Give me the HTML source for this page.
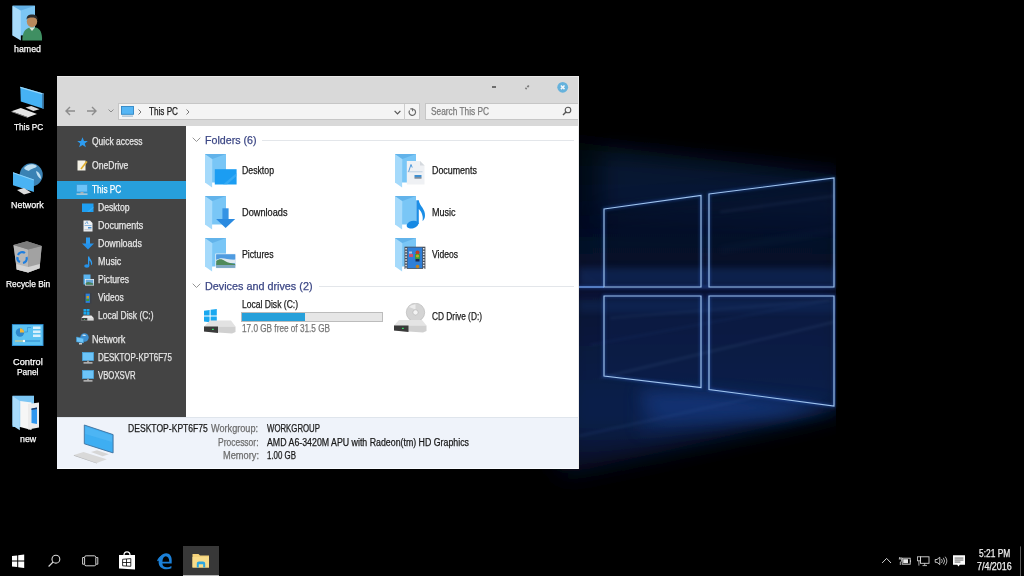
<!DOCTYPE html><html><head><meta charset="utf-8"><style>*{margin:0;padding:0;box-sizing:border-box}
html,body{width:1024px;height:576px;overflow:hidden;background:#000;font-family:"Liberation Sans",sans-serif}
.a{position:absolute}
.t{position:absolute;white-space:nowrap;line-height:1;-webkit-text-stroke:0.25px currentColor}
</style></head><body><svg id="wall" class="a" style="left:0;top:0" width="1024" height="576" viewBox="0 0 1024 576"><defs><linearGradient id="wg" x1="0" y1="0" x2="0" y2="1"><stop offset="0" stop-color="#020712"/><stop offset="0.3" stop-color="#061230"/><stop offset="0.6" stop-color="#0b1f4c"/><stop offset="0.82" stop-color="#0f2a60"/><stop offset="1" stop-color="#060f2c"/></linearGradient><filter id="glow" x="-20%" y="-20%" width="140%" height="140%"><feGaussianBlur stdDeviation="1.5"/></filter><filter id="b8" x="-50%" y="-50%" width="200%" height="200%"><feGaussianBlur stdDeviation="8"/></filter><filter id="b3" x="-50%" y="-50%" width="200%" height="200%"><feGaussianBlur stdDeviation="3"/></filter><clipPath id="wc"><rect x="0" y="0" width="836" height="576"/></clipPath><filter id="b12" x="-50%" y="-50%" width="200%" height="200%"><feGaussianBlur stdDeviation="12"/></filter></defs><rect width="1024" height="576" fill="#000"/><g clip-path="url(#wc)" opacity="0.8"><polygon points="560,140 845,176 845,408 560,476" fill="url(#wg)" filter="url(#b12)"/><polygon points="640,385 705,392 840,406 720,424 640,432" fill="#1a3f90" opacity="0.45" filter="url(#b8)"/><polygon points="600,150 845,176 845,225 600,215" fill="#12306a" opacity="0.45" filter="url(#b12)"/><polygon points="604,215 834,190 834,260 604,260" fill="#0c2250" opacity="0.35" filter="url(#b12)"/><g fill="#040e24" opacity="0.3"><polygon points="604,209 701,195.5 701,287 604,287" /><polygon points="709,194 834,178 834,287 709,287" /><polygon points="604,296 701,296 701,387.5 604,376" /><polygon points="709,296 834,296 834,406 709,389.5" /></g><polygon points="604,296 834,296 834,406 709,389.5 604,376" fill="#12357e" opacity="0.35" filter="url(#b3)"/><path d="M600 378 L834 322" stroke="#6f96d0" stroke-width="1.5" opacity="0.25" filter="url(#glow)"/><path d="M610 318 L834 300" stroke="#6f96d0" stroke-width="1.5" opacity="0.18" filter="url(#glow)"/><path d="M720 212 L834 196" stroke="#6f96d0" stroke-width="2" opacity="0.15" filter="url(#glow)"/><polygon points="640,395 705,392 834,406 780,418 660,420" fill="#1d4fb0" opacity="0.45" filter="url(#b8)"/><rect x="579" y="268" width="257" height="18" fill="#1c4c9e" opacity="0.4" filter="url(#b3)"/><rect x="579" y="300" width="257" height="12" fill="#1c4c9e" opacity="0.25" filter="url(#b3)"/><path d="M579 436 L760 396" stroke="#4a78c8" stroke-width="1.2" opacity="0.4" filter="url(#glow)"/><path d="M590 345 L830 300" stroke="#3a64b0" stroke-width="1" opacity="0.3" filter="url(#glow)"/><path d="M720 250 L834 230" stroke="#3a5a90" stroke-width="2" opacity="0.25" filter="url(#b3)"/></g><g fill="none" stroke="#3d7fff" stroke-width="2.5" filter="url(#glow)" opacity="0.35"><polygon points="604,209 701,195.5 701,287 604,287" /><polygon points="709,194 834,178 834,287 709,287" /><polygon points="604,296 701,296 701,387.5 604,376" /><polygon points="709,296 834,296 834,406 709,389.5" /><line x1="560" y1="287" x2="710" y2="287"/></g><g fill="none" stroke="#a0c4ee" stroke-width="1.15"><polygon points="604,209 701,195.5 701,287 604,287" /><polygon points="709,194 834,178 834,287 709,287" /><polygon points="604,296 701,296 701,387.5 604,376" /><polygon points="709,296 834,296 834,406 709,389.5" /></g><line x1="579" y1="287" x2="604" y2="287" stroke="#7fb2ff" stroke-width="1.2"/></svg><svg class="a" style="left:0px;top:0px;" width="56" height="45" viewBox="0 0 56 45"><polygon points="12.5,5.7 35,5.7 35,35.4 12.5,35.4" fill="#7cc6f4"/><polygon points="12.5,5.7 35,5.7 20.8,10.5" fill="#62b0e6"/><polygon points="12.5,6 20.8,10.8 20.8,40.6 12.5,35.6" fill="#a8dbfb"/><path d="M22.4 40.6 C22 33 25 28.5 30 27.5 L36 27.5 C40 28.5 42.5 33 42 40.6 Z" fill="#3f8f62"/><path d="M29 27.5 L32 31 L35 27.5 Z" fill="#d8e8d8"/><ellipse cx="32" cy="21.5" rx="5.2" ry="5.8" fill="#b9895c"/><path d="M26.6 19.5 C26.5 15.5 29 14.5 32 14.5 C35.5 14.5 37.8 16 37.6 20 C36.5 18 34 17.5 32 17.5 C29.5 17.5 27.5 18 26.6 19.5 Z" fill="#2c2c2c"/></svg><svg class="a" style="left:0px;top:80px;" width="56" height="45" viewBox="0 80 56 45"><polygon points="20.3,86.8 43.5,93.6 43.5,108.8 20.8,101.5" fill="#46b2f4"/><polygon points="20.3,86.8 43.5,93.6 43.5,94.8 20.3,88" fill="#9cd8fa"/><polygon points="42.2,93.2 43.8,93.7 43.8,109 42.2,108.5" fill="#3a6f98"/><polygon points="25.5,107.6 31.25,106 39.6,109.2 33.3,110.9" fill="#d8d8d8"/><polygon points="11.5,111.25 20.8,108.1 37,113.9 28.1,117.2" fill="#e6e6e6"/><polygon points="11.5,111.25 28.1,117.2 28.1,118 11.5,112" fill="#9a9a9a"/></svg><svg class="a" style="left:0px;top:155px;" width="56" height="45" viewBox="0 155 56 45"><circle cx="31.25" cy="174.8" r="11.5" fill="#3a82b4"/><path d="M24 168 C27 164 33 163 37 166 C35 169 31 168 29 171 C27 170 25 170 24 168 Z" fill="#bfe0f2"/><path d="M36 171 C39 172 41 175 41 179 C39 178 37 176 36 171 Z" fill="#bfe0f2"/><polygon points="13,172.2 33.9,179.5 33.9,192 13,185.2" fill="#4ab3f3"/><polygon points="13,172.2 33.9,179.5 33.9,180.5 13,173.2" fill="#8fd3fa"/><polygon points="17,190 24,188 31,192.5 24,194.5" fill="#dcdcdc"/></svg><svg class="a" style="left:0px;top:235px;" width="56" height="45" viewBox="0 235 56 45"><polygon points="13.5,244.9 27,241.25 41.7,246 39.6,268.3 28.1,272.5 16.7,269.4" fill="#8c8c8c"/><polygon points="13.5,244.9 28.1,249.6 28.1,272.5 16.7,269.4" fill="#b8b8b8"/><polygon points="28.1,249.6 41.7,246 39.6,268.3 28.1,272.5" fill="#a2a2a2"/><polygon points="13.5,244.9 27,241.25 41.7,246 28.1,249.6" fill="#7c7c7c"/><polygon points="16.5,264 28.1,267 39.8,264 39.6,268.3 28.1,272.5 16.7,269.4" fill="#d4d4d4"/><g fill="none" stroke="#1f7fe0" stroke-width="2.2"><path d="M18 255 A4.5 4.5 0 0 1 25 253"/><path d="M26.5 257 A4.5 4.5 0 0 1 23 263"/><path d="M20 262 A4.5 4.5 0 0 1 17.5 257"/></g></svg><svg class="a" style="left:0px;top:315px;" width="56" height="45" viewBox="0 315 56 45"><rect x="11.9" y="324.1" width="31.6" height="21.9" fill="#2e8fd4"/><rect x="12.8" y="325" width="29.8" height="20.1" fill="#5cc2f2"/><circle cx="20" cy="332.5" r="4.2" fill="#2e88cc"/><path d="M20 332.5 L20 328.3 A4.2 4.2 0 0 1 24.2 332.5 Z" fill="#f2b83a"/><path d="M24.5 332 L27.5 332 L27.5 327.5 L31 327.5" stroke="#2e88cc" stroke-width="0.6" fill="none"/><rect x="33" y="326.5" width="7.5" height="2.5" fill="#d8f0fc"/><rect x="33" y="330.5" width="7.5" height="2.5" fill="#d8f0fc"/><rect x="33" y="334.5" width="7.5" height="2.5" fill="#d8f0fc"/><rect x="15" y="340.5" width="9" height="1" fill="#f2d27a"/><rect x="24" y="340.5" width="16" height="1" fill="#2e88cc"/><circle cx="24" cy="341" r="1.2" fill="#fff"/></svg><svg class="a" style="left:0px;top:390px;" width="56" height="45" viewBox="0 390 56 45"><polygon points="12.5,395.7 34,395.7 34,427 12.5,427" fill="#7cc6f4"/><polygon points="12.5,396 19.8,401 19.8,430.2 12.5,425.5" fill="#a8dbfb"/><polygon points="20.2,401 31.5,402.5 31.5,430 20.2,427" fill="#f6f6f6"/><polygon points="28,404 39,402.5 39,427.5 28,429.5" fill="#ececec"/><polygon points="31.5,408.5 37,407.5 37,424 31.5,423" fill="#2f96ee"/><polygon points="31.5,408.5 37,407.5 37,409 31.5,410" fill="#1a3a6a"/></svg><span class="t" style="left:14.00px;top:44.07px;font-size:9.60px;color:#ffffff;transform:scaleX(0.9191);transform-origin:left top;">hamed</span><span class="t" style="left:13.50px;top:122.07px;font-size:9.60px;color:#ffffff;transform:scaleX(0.8556);transform-origin:left top;">This PC</span><span class="t" style="left:11.00px;top:200.07px;font-size:9.60px;color:#ffffff;transform:scaleX(0.9283);transform-origin:left top;">Network</span><span class="t" style="left:5.70px;top:279.07px;font-size:9.60px;color:#ffffff;transform:scaleX(0.8740);transform-origin:left top;">Recycle Bin</span><span class="t" style="left:12.75px;top:357.07px;font-size:9.60px;color:#ffffff;transform:scaleX(0.9609);transform-origin:left top;">Control</span><span class="t" style="left:16.50px;top:367.07px;font-size:9.60px;color:#ffffff;transform:scaleX(0.8748);transform-origin:left top;">Panel</span><span class="t" style="left:19.80px;top:434.07px;font-size:9.60px;color:#ffffff;transform:scaleX(0.9196);transform-origin:left top;">new</span><div class="a" style="left:57px;top:76px;width:522px;height:393px;background:#fff;"></div><div class="a" style="left:57px;top:76px;width:522px;height:393px;background:transparent;border-top:1px solid #e8e8e8;border-right:1px solid #ececec;z-index:5"></div><div class="a" style="left:57px;top:76px;width:522px;height:50px;background:#d9d9d9;"></div><div class="a" style="left:492px;top:86.3px;width:4.4px;height:1.6px;background:#6e6e6e;"></div><svg class="a" style="left:523px;top:83px;" width="8" height="8" viewBox="0 0 8 8"><path d="M2.5 6 L3.6 4.9 M4.4 4.1 L5.8 2.5" stroke="#7a7a7a" stroke-width="1.8" fill="none"/></svg><svg class="a" style="left:555.5px;top:80.5px;" width="13" height="13" viewBox="0 0 13 13"><circle cx="6.7" cy="6.3" r="5.4" fill="#66b2dc"/><path d="M4.9 4.5 L8.5 8.1 M8.5 4.5 L4.9 8.1" stroke="#f4f8fb" stroke-width="1.5"/></svg><svg class="a" style="left:64px;top:105px;" width="12" height="12" viewBox="0 0 12 12"><path d="M11 6 H2 M6 2 L2 6 L6 10" stroke="#8c8c8c" stroke-width="1.4" fill="none"/></svg><svg class="a" style="left:86px;top:105px;" width="12" height="12" viewBox="0 0 12 12"><path d="M1 6 H10 M6 2 L10 6 L6 10" stroke="#8c8c8c" stroke-width="1.4" fill="none"/></svg><svg class="a" style="left:108px;top:109px;" width="6" height="4" viewBox="0 0 6 4"><path d="M0.5 0.5 L3 3 L5.5 0.5" stroke="#8c8c8c" stroke-width="1" fill="none"/></svg><div class="a" style="left:118px;top:103px;width:301.5px;height:17px;background:#f4f4f4;border:1px solid #c6c6c6"></div><div class="a" style="left:404px;top:103.5px;width:1px;height:16px;background:#cdcdcd;"></div><svg class="a" style="left:120.5px;top:106px;" width="13" height="11" viewBox="0 0 13 11"><rect x="0.5" y="0.5" width="12" height="7.8" fill="#55b6f5" stroke="#2f86c4" stroke-width="0.9"/><rect x="1" y="9.6" width="11" height="1" fill="#8fb0c8"/></svg><svg class="a" style="left:138px;top:108.5px;" width="4" height="6" viewBox="0 0 4 6"><path d="M0.5 0.5 L3 3 L0.5 5.5" stroke="#777" stroke-width="1" fill="none"/></svg><span class="t" style="left:149.30px;top:106.73px;font-size:10.00px;color:#1a1a1a;transform:scaleX(0.8158);transform-origin:left top;">This PC</span><svg class="a" style="left:185.5px;top:108.5px;" width="4" height="6" viewBox="0 0 4 6"><path d="M0.5 0.5 L3 3 L0.5 5.5" stroke="#777" stroke-width="1" fill="none"/></svg><svg class="a" style="left:394px;top:110px;" width="7" height="5" viewBox="0 0 7 5"><path d="M0.6 0.8 L3.5 3.8 L6.4 0.8" stroke="#555" stroke-width="1.2" fill="none"/></svg><svg class="a" style="left:407px;top:106px;" width="10" height="10" viewBox="0 0 10 10"><path d="M5.4 3 A3.2 3.2 0 1 1 2.6 4.5" stroke="#6a6a6a" stroke-width="1.2" fill="none"/><path d="M3.3 2.9 L5.6 2.9 L5.6 5.2" stroke="#6a6a6a" stroke-width="1.1" fill="none"/></svg><div class="a" style="left:424.5px;top:103px;width:154px;height:17px;background:#f4f4f4;border:1px solid #c6c6c6"></div><span class="t" style="left:431.40px;top:106.73px;font-size:10.00px;color:#7a7a7a;transform:scaleX(0.8304);transform-origin:left top;">Search This PC</span><svg class="a" style="left:562px;top:106px;" width="10" height="10" viewBox="0 0 10 10"><circle cx="6" cy="4" r="2.8" stroke="#555" stroke-width="1.1" fill="none"/><path d="M4 6 L1 9" stroke="#555" stroke-width="1.4"/></svg><div class="a" style="left:57px;top:126px;width:129px;height:291px;background:#444444;"></div><div class="a" style="left:57px;top:181px;width:129px;height:18px;background:#279fdc;"></div><svg class="a" style="left:77px;top:137px;" width="11" height="11" viewBox="0 0 11 11"><polygon points="5.5,0.3 7,4 10.8,4.1 7.8,6.5 8.9,10.3 5.5,8.1 2.1,10.3 3.2,6.5 0.2,4.1 4,4" fill="#2d9cf0"/></svg><span class="t" style="left:92.00px;top:136.73px;font-size:10.00px;color:#e6e6e6;transform:scaleX(0.8478);transform-origin:left top;">Quick access</span><svg class="a" style="left:77px;top:160px;" width="11" height="11" viewBox="0 0 11 11"><rect x="0.5" y="0.5" width="8" height="10" fill="#f4f1e6"/><path d="M9.8 1.5 L4 9" stroke="#f0c040" stroke-width="1.8"/><path d="M9.8 1.5 L4 9" stroke="#b88a20" stroke-width="0.5"/></svg><span class="t" style="left:92.00px;top:160.73px;font-size:10.00px;color:#e6e6e6;transform:scaleX(0.8568);transform-origin:left top;">OneDrive</span><svg class="a" style="left:76px;top:184px;" width="12" height="11" viewBox="0 0 12 11"><rect x="0.5" y="0.5" width="11" height="7.5" fill="#6cc4f8" stroke="#3a9ad8" stroke-width="0.8"/><rect x="4.5" y="8" width="3" height="1.5" fill="#aaa"/><rect x="0.5" y="9.5" width="11" height="1.2" fill="#d8d8d8"/></svg><span class="t" style="left:92.00px;top:184.73px;font-size:10.00px;color:#ffffff;transform:scaleX(0.8242);transform-origin:left top;">This PC</span><svg class="a" style="left:82px;top:203px;" width="12" height="10" viewBox="0 0 12 10"><rect x="0" y="0.5" width="11.5" height="8.5" fill="#1e9ff2"/><polygon points="5,9 11.5,3.5 11.5,5 7,9" fill="#3fb2f8" opacity="0.7"/></svg><span class="t" style="left:98.00px;top:202.73px;font-size:10.00px;color:#e6e6e6;transform:scaleX(0.8610);transform-origin:left top;">Desktop</span><svg class="a" style="left:83px;top:220px;" width="10" height="12" viewBox="0 0 10 12"><polygon points="0.5,0.5 7,0.5 9.5,3 9.5,11.5 0.5,11.5" fill="#eef0f2"/><rect x="1.5" y="5" width="7" height="0.6" fill="#4a90d0"/><path d="M2 4 L4 1.5 L5 4" stroke="#4a90d0" stroke-width="0.7" fill="none"/><rect x="5" y="7" width="3.5" height="1.5" fill="#4a90d0"/><rect x="1.5" y="9.5" width="7" height="0.6" fill="#a8b0b8"/></svg><span class="t" style="left:98.00px;top:220.73px;font-size:10.00px;color:#e6e6e6;transform:scaleX(0.8933);transform-origin:left top;">Documents</span><svg class="a" style="left:82px;top:237px;" width="12" height="13" viewBox="0 0 12 13"><rect x="4" y="0.5" width="4" height="7" fill="#2d9cf0"/><polygon points="0,6.5 12,6.5 6,12.5" fill="#2592ea"/></svg><span class="t" style="left:98.00px;top:238.73px;font-size:10.00px;color:#e6e6e6;transform:scaleX(0.8857);transform-origin:left top;">Downloads</span><svg class="a" style="left:84px;top:256px;" width="9" height="12" viewBox="0 0 9 12"><path d="M4 0.5 L5.3 0.5 C5.8 3 8.5 4.5 8.2 7.5 C8 8.5 7.5 9 7 9.3 C7.3 7.5 6.5 5.5 5.3 4.6 L5.3 10 L4 10 Z" fill="#2d9cf0"/><ellipse cx="2.8" cy="10" rx="2.6" ry="1.8" fill="#2592ea"/></svg><span class="t" style="left:98.00px;top:256.74px;font-size:10.00px;color:#e6e6e6;transform:scaleX(0.8927);transform-origin:left top;">Music</span><svg class="a" style="left:83px;top:274px;" width="11" height="12" viewBox="0 0 11 12"><rect x="0.5" y="0.5" width="7" height="10" fill="#5ab4f0"/><rect x="2" y="5" width="9" height="6.5" fill="#f0f4f8"/><rect x="2.7" y="5.7" width="7.6" height="5.1" fill="#6aa8d8"/><path d="M2.7 9 C5 7 7 8 10.3 9.5 L10.3 10.8 L2.7 10.8 Z" fill="#4a8058"/></svg><span class="t" style="left:98.00px;top:274.74px;font-size:10.00px;color:#e6e6e6;transform:scaleX(0.8560);transform-origin:left top;">Pictures</span><svg class="a" style="left:84px;top:293px;" width="8" height="11" viewBox="0 0 8 11"><rect x="0" y="0" width="7.5" height="10.5" fill="#3a3f48"/><rect x="1.6" y="0.6" width="4.3" height="9.3" fill="#2f7fd8"/><rect x="2.5" y="3" width="2.5" height="2.5" fill="#c8a020"/><rect x="2.2" y="6" width="3" height="2" fill="#3a9a40"/></svg><span class="t" style="left:98.00px;top:292.74px;font-size:10.00px;color:#e6e6e6;transform:scaleX(0.8454);transform-origin:left top;">Videos</span><svg class="a" style="left:81px;top:309px;" width="13" height="12" viewBox="0 0 13 12"><g fill="#1aa9f0"><rect x="2.5" y="0" width="2.6" height="2.6"/><rect x="5.5" y="-0.3" width="3" height="2.9"/><rect x="2.5" y="3" width="2.6" height="2.6"/><rect x="5.5" y="3" width="3" height="2.9"/></g><polygon points="0.3,9 2.5,6.5 10.5,6.5 12.7,9" fill="#e8e8e8"/><rect x="0.3" y="9" width="12.4" height="2.6" fill="#d8d8d8"/><rect x="0.3" y="9" width="6" height="2.6" fill="#404040"/><rect x="3" y="10" width="1" height="0.8" fill="#3adf6a"/></svg><span class="t" style="left:98.00px;top:310.74px;font-size:10.00px;color:#e6e6e6;transform:scaleX(0.8467);transform-origin:left top;">Local Disk (C:)</span><svg class="a" style="left:76px;top:333px;" width="13" height="12" viewBox="0 0 13 12"><circle cx="8.5" cy="4.5" r="4.2" fill="#3d8fcf"/><path d="M6 2 C7.5 1 9 1.5 10 2.5 C9 3.5 7 3 6 2 Z" fill="#cfe6f4"/><polygon points="0.5,4 7.5,5.5 7.5,10 0.5,8.8" fill="#6cc4f8" stroke="#3a9ad8" stroke-width="0.5"/><rect x="3" y="10" width="3" height="1.5" fill="#ccc"/></svg><span class="t" style="left:92.00px;top:334.74px;font-size:10.00px;color:#e6e6e6;transform:scaleX(0.9088);transform-origin:left top;">Network</span><svg class="a" style="left:82px;top:352px;" width="12" height="12" viewBox="0 0 12 12"><rect x="0.5" y="0.5" width="11" height="8" fill="#6cc4f8" stroke="#4aa5dd" stroke-width="0.8"/><rect x="5" y="8.5" width="2" height="1.8" fill="#999"/><rect x="1.5" y="10.3" width="9" height="1.2" fill="#d8d8d8"/></svg><span class="t" style="left:98.00px;top:352.74px;font-size:10.00px;color:#e6e6e6;transform:scaleX(0.7929);transform-origin:left top;">DESKTOP-KPT6F75</span><svg class="a" style="left:82px;top:370px;" width="12" height="12" viewBox="0 0 12 12"><rect x="0.5" y="0.5" width="11" height="8" fill="#6cc4f8" stroke="#4aa5dd" stroke-width="0.8"/><rect x="5" y="8.5" width="2" height="1.8" fill="#999"/><rect x="1.5" y="10.3" width="9" height="1.2" fill="#d8d8d8"/></svg><span class="t" style="left:98.00px;top:370.74px;font-size:10.00px;color:#e6e6e6;transform:scaleX(0.7756);transform-origin:left top;">VBOXSVR</span><svg class="a" style="left:192px;top:137px;" width="9" height="6" viewBox="0 0 9 6"><path d="M0.7 0.7 L4.5 4.5 L8.3 0.7" stroke="#8a8a8a" stroke-width="0.9" fill="none"/></svg><span class="t" style="left:204.50px;top:134.89px;font-size:11.00px;color:#3d4886;transform:scaleX(0.9683);transform-origin:left top;">Folders (6)</span><div class="a" style="left:262px;top:140px;width:312px;height:1px;background:#e3e6ea;"></div><svg class="a" style="left:205.2px;top:154.2px;" width="34" height="36" viewBox="0 0 34 36"><polygon points="0,0 21,0 21,28.5 0,28.5" fill="#79c6f6"/><polygon points="0,0 21,0 7.3,5" fill="#62b3ea"/><polygon points="0,0.3 7.3,5.2 7.1,33.4 0,28.4" fill="#a5dafb"/><rect x="9.8" y="15.2" width="21.8" height="15.3" fill="#1b9df2"/><polygon points="18,30.5 31.6,19 31.6,22 22,30.5" fill="#46b3f7" opacity="0.6"/></svg><svg class="a" style="left:395.4px;top:154.2px;" width="34" height="36" viewBox="0 0 34 36"><polygon points="0,0 21,0 21,28.5 0,28.5" fill="#79c6f6"/><polygon points="0,0 21,0 7.3,5" fill="#62b3ea"/><polygon points="0,0.3 7.3,5.2 7.1,33.4 0,28.4" fill="#a5dafb"/><polygon points="11.8,7 25,7 29.5,11.5 29.5,30.5 11.8,30.5" fill="#eff1f4"/><polygon points="25,7 29.5,11.5 25,11.5" fill="#d5d9de"/><path d="M13.5 18 L16 10.5 L17.2 13.5" stroke="#3d8fd8" stroke-width="0.9" fill="none"/><rect x="12.5" y="17.5" width="15" height="0.7" fill="#a7c4dc"/><rect x="19.5" y="21" width="7" height="2.2" fill="#3f8fd0"/><rect x="19.5" y="23.2" width="7" height="1.4" fill="#6a7a8a"/></svg><span class="t" style="left:241.70px;top:165.73px;font-size:10.00px;color:#1a1a1a;transform:scaleX(0.8719);transform-origin:left top;">Desktop</span><span class="t" style="left:432.00px;top:165.73px;font-size:10.00px;color:#1a1a1a;transform:scaleX(0.8874);transform-origin:left top;">Documents</span><svg class="a" style="left:205.2px;top:196.1px;" width="34" height="36" viewBox="0 0 34 36"><polygon points="0,0 21,0 21,28.5 0,28.5" fill="#79c6f6"/><polygon points="0,0 21,0 7.3,5" fill="#62b3ea"/><polygon points="0,0.3 7.3,5.2 7.1,33.4 0,28.4" fill="#a5dafb"/><rect x="17.4" y="12.3" width="6.2" height="11.5" fill="#3593e4"/><polygon points="11.1,23.1 30.2,23.1 20.6,32.1" fill="#2a8ae0"/></svg><svg class="a" style="left:395.4px;top:196.1px;" width="34" height="36" viewBox="0 0 34 36"><polygon points="0,0 21,0 21,28.5 0,28.5" fill="#79c6f6"/><polygon points="0,0 21,0 7.3,5" fill="#62b3ea"/><polygon points="0,0.3 7.3,5.2 7.1,33.4 0,28.4" fill="#a5dafb"/><path d="M21.3 4.3 L23.8 4.3 C24.5 10 30.5 13 30 20 C29.8 22.5 28.8 24 27.5 25 C28.5 21 27 16 23.8 13 L23.8 28 L21.3 28 Z" fill="#1b8ee6"/><ellipse cx="17.5" cy="28.6" rx="6" ry="3.7" transform="rotate(-15 17.5 28.6)" fill="#1689e3"/></svg><span class="t" style="left:241.70px;top:207.73px;font-size:10.00px;color:#1a1a1a;transform:scaleX(0.9201);transform-origin:left top;">Downloads</span><span class="t" style="left:432.00px;top:207.73px;font-size:10.00px;color:#1a1a1a;transform:scaleX(0.9004);transform-origin:left top;">Music</span><svg class="a" style="left:205.2px;top:238px;" width="34" height="36" viewBox="0 0 34 36"><polygon points="0,0 21,0 21,28.5 0,28.5" fill="#79c6f6"/><polygon points="0,0 21,0 7.3,5" fill="#62b3ea"/><polygon points="0,0.3 7.3,5.2 7.1,33.4 0,28.4" fill="#a5dafb"/><rect x="10.4" y="15.6" width="20.5" height="15" fill="#f4f6f8"/><rect x="11.2" y="16.4" width="19" height="13.4" fill="#6fb0e8"/><rect x="11.2" y="16.4" width="19" height="5" fill="#4f9be0"/><path d="M11.2 22 C15 19.5 18 20 22 21 C25 21.5 28 22 30.2 21.5 L30.2 25 L11.2 25 Z" fill="#dfe9ef"/><path d="M11.2 23 C14 20.5 17 21 20 23 C23 25 27 25.5 30.2 26 L30.2 27.5 L11.2 27.5 Z" fill="#4f8a5a"/><rect x="11.2" y="27" width="19" height="2.8" fill="#7fa8c0"/></svg><svg class="a" style="left:395.4px;top:238px;" width="34" height="36" viewBox="0 0 34 36"><polygon points="0,0 21,0 21,28.5 0,28.5" fill="#79c6f6"/><polygon points="0,0 21,0 7.3,5" fill="#62b3ea"/><polygon points="0,0.3 7.3,5.2 7.1,33.4 0,28.4" fill="#a5dafb"/><rect x="9.5" y="8.7" width="20.9" height="22.2" fill="#4a4f58"/><rect x="12.5" y="9.5" width="14.8" height="20.6" fill="#2f7fd8"/><rect x="10.3" y="10" width="1.5" height="1.5" fill="#e8ecf0"/><rect x="28" y="10" width="1.5" height="1.5" fill="#e8ecf0"/><rect x="10.3" y="12.8" width="1.5" height="1.5" fill="#e8ecf0"/><rect x="28" y="12.8" width="1.5" height="1.5" fill="#e8ecf0"/><rect x="10.3" y="15.6" width="1.5" height="1.5" fill="#e8ecf0"/><rect x="28" y="15.6" width="1.5" height="1.5" fill="#e8ecf0"/><rect x="10.3" y="18.4" width="1.5" height="1.5" fill="#e8ecf0"/><rect x="28" y="18.4" width="1.5" height="1.5" fill="#e8ecf0"/><rect x="10.3" y="21.2" width="1.5" height="1.5" fill="#e8ecf0"/><rect x="28" y="21.2" width="1.5" height="1.5" fill="#e8ecf0"/><rect x="10.3" y="24" width="1.5" height="1.5" fill="#e8ecf0"/><rect x="28" y="24" width="1.5" height="1.5" fill="#e8ecf0"/><rect x="10.3" y="26.8" width="1.5" height="1.5" fill="#e8ecf0"/><rect x="28" y="26.8" width="1.5" height="1.5" fill="#e8ecf0"/><rect x="10.3" y="29.6" width="1.5" height="1.5" fill="#e8ecf0"/><rect x="28" y="29.6" width="1.5" height="1.5" fill="#e8ecf0"/><circle cx="22.5" cy="14.5" r="2" fill="#c04020"/><rect x="20" y="16" width="5" height="5" fill="#3a9a40"/><circle cx="22.5" cy="18" r="1.6" fill="#c8a820"/><rect x="14" y="16" width="4" height="3" fill="#d05070"/><rect x="14" y="13.5" width="3" height="2" fill="#b0c8e8"/><rect x="20.5" y="21" width="4" height="2.5" fill="#1a2a50"/><circle cx="22.5" cy="28.5" r="1.8" fill="#c08020"/></svg><span class="t" style="left:241.70px;top:249.73px;font-size:10.00px;color:#1a1a1a;transform:scaleX(0.8726);transform-origin:left top;">Pictures</span><span class="t" style="left:432.00px;top:249.73px;font-size:10.00px;color:#1a1a1a;transform:scaleX(0.8553);transform-origin:left top;">Videos</span><svg class="a" style="left:192px;top:283px;" width="9" height="6" viewBox="0 0 9 6"><path d="M0.7 0.7 L4.5 4.5 L8.3 0.7" stroke="#8a8a8a" stroke-width="0.9" fill="none"/></svg><span class="t" style="left:204.50px;top:280.89px;font-size:11.00px;color:#3d4886;transform:scaleX(0.9822);transform-origin:left top;">Devices and drives (2)</span><div class="a" style="left:319px;top:286px;width:255px;height:1px;background:#e3e6ea;"></div><svg class="a" style="left:203.6px;top:309px;" width="33" height="25" viewBox="0 -1 33 25"><g fill="#19a8f0"><polygon points="0,0.8 5.6,0 5.6,5.6 0,5.6"/><polygon points="6.6,-0.2 12.8,-1 12.8,5.6 6.6,5.6"/><polygon points="0,6.6 5.6,6.6 5.6,12.2 0,11.4"/><polygon points="6.6,6.6 12.8,6.6 12.8,13 6.6,12.2"/></g><polygon points="0,16.5 6,10.5 27,10.5 31.5,16.5" fill="#e2e2e2"/><polygon points="0,16.5 31.5,16.5 31.5,22 28,23.5 0,21.5" fill="#d0d0d0"/><polygon points="0,16.5 14,16.5 14,23 0,21.5" fill="#3a3a3a"/><rect x="8" y="18.8" width="1.8" height="1.2" fill="#3adf6a"/></svg><span class="t" style="left:241.80px;top:299.74px;font-size:10.00px;color:#1a1a1a;transform:scaleX(0.8543);transform-origin:left top;">Local Disk (C:)</span><div class="a" style="left:241px;top:312px;width:141.5px;height:9.5px;background:#e6e6e6;border:1px solid #bcbcbc"></div><div class="a" style="left:242px;top:313px;width:63px;height:7.5px;background:#26a0da;"></div><span class="t" style="left:241.80px;top:323.74px;font-size:10.00px;color:#767676;transform:scaleX(0.8201);transform-origin:left top;">17.0 GB free of 31.5 GB</span><svg class="a" style="left:394px;top:303px;" width="34" height="31" viewBox="0 0 34 31"><circle cx="21.5" cy="9.4" r="9.2" fill="#d4d4d4"/><circle cx="21.5" cy="9.4" r="9.2" fill="none" stroke="#b4b4b4" stroke-width="0.6"/><path d="M15 4 A8 8 0 0 1 21.5 1.5 L21.5 6.5 Z" fill="#ececec"/><circle cx="21.5" cy="9.4" r="2.6" fill="#f4f4f4" stroke="#a8a8a8" stroke-width="0.5"/><polygon points="0,22.5 5,17 28,17 32.5,22.5" fill="#e4e4e4"/><polygon points="0,22.5 32.5,22.5 32.5,28 29,29.5 0,27.5" fill="#d0d0d0"/><polygon points="0,22.5 14.5,22.5 14.5,29 0,27.5" fill="#3a3a3a"/><rect x="8" y="24.8" width="1.8" height="1.2" fill="#3adf6a"/></svg><span class="t" style="left:432.00px;top:311.74px;font-size:10.00px;color:#1a1a1a;transform:scaleX(0.8333);transform-origin:left top;">CD Drive (D:)</span><div class="a" style="left:57px;top:417px;width:522px;height:52px;background:#eff3fa;border-top:1px solid #dfe5ec;border-bottom:1px solid #fafcff;border-right:1px solid #fafcff"></div><svg class="a" style="left:70px;top:422px;" width="48" height="44" viewBox="0 0 48 44"><polygon points="21,30 27,28.2 38.9,32.2 32.7,34.25" fill="#d6d6d6"/><polygon points="3.9,33 13.5,30 36.8,37.2 26.8,40.9" fill="#d9d9d9"/><polygon points="3.9,33 26.8,40.9 26.8,41.6 3.9,33.7" fill="#b0b0b0"/><polygon points="14.3,3 43.1,12.6 43.1,30.9 14.3,21.75" fill="#3eaef2" stroke="#3f6f9c" stroke-width="0.9"/><polygon points="15.3,4.5 42,13.5 42,20 15.3,12" fill="#5cbcf6" opacity="0.5"/></svg><span class="t" style="left:127.90px;top:423.74px;font-size:10.00px;color:#1a1a1a;transform:scaleX(0.8573);transform-origin:left top;">DESKTOP-KPT6F75</span><span class="t" style="left:211.40px;top:423.74px;font-size:10.00px;color:#6d6d6d;transform:scaleX(0.9126);transform-origin:left top;">Workgroup:</span><span class="t" style="left:267.30px;top:423.74px;font-size:10.00px;color:#1a1a1a;transform:scaleX(0.7817);transform-origin:left top;">WORKGROUP</span><span class="t" style="left:218.00px;top:437.74px;font-size:10.00px;color:#6d6d6d;transform:scaleX(0.8473);transform-origin:left top;">Processor:</span><span class="t" style="left:267.30px;top:437.74px;font-size:10.00px;color:#1a1a1a;transform:scaleX(0.8800);transform-origin:left top;">AMD A6-3420M APU with Radeon(tm) HD Graphics</span><span class="t" style="left:222.50px;top:450.74px;font-size:10.00px;color:#6d6d6d;transform:scaleX(0.9254);transform-origin:left top;">Memory:</span><span class="t" style="left:267.30px;top:450.74px;font-size:10.00px;color:#1a1a1a;transform:scaleX(0.7902);transform-origin:left top;">1.00 GB</span><div class="a" style="left:0px;top:540px;width:1024px;height:36px;background:#000;"></div><svg class="a" style="left:0px;top:544px;" width="104" height="32" viewBox="0 0 104 32"><g fill="#fff" transform="translate(0,0.8)"><polygon points="12,11.3 17.2,10.6 17.2,15.8 12,15.8"/><polygon points="18.2,10.5 24.2,9.7 24.2,15.8 18.2,15.8"/><polygon points="12,16.8 17.2,16.8 17.2,22.2 12,21.6"/><polygon points="18.2,16.8 24.2,16.8 24.2,23.2 18.2,22.4"/></g><circle cx="55.9" cy="15.2" r="3.9" fill="none" stroke="#d8d8d8" stroke-width="1.1"/><path d="M53.1 18 L48.6 22.5" stroke="#d8d8d8" stroke-width="1.2"/><rect x="84.6" y="11.8" width="11.2" height="10" rx="1.5" fill="none" stroke="#cfcfcf" stroke-width="1"/><path d="M84.3 13.5 L82.6 13.5 L82.6 20.2 L84.3 20.2 M96.1 13.5 L97.8 13.5 L97.8 20.2 L96.1 20.2" fill="none" stroke="#cfcfcf" stroke-width="1"/></svg><svg class="a" style="left:118px;top:551px;" width="19" height="20" viewBox="0 0 19 20"><path d="M6 4 C6 1.5 7.5 0.8 9 0.8 C10.5 0.8 12 1.5 12 4" stroke="#fff" stroke-width="1.2" fill="none"/><polygon points="1,4 17,4 17,18.4 1,17.4" fill="#fff"/><g fill="none" stroke="#000" stroke-width="0.8"><polygon points="4.6,8.3 12.8,7.6 12.8,15.3 4.6,14.8"/><path d="M8.5 8 L8.5 15 M4.6 11.5 L12.8 11.5"/></g></svg><svg class="a" style="left:155px;top:551px;" width="19" height="20" viewBox="0 0 19 20"><path fill-rule="evenodd" d="M16.7 12.4 L7.3 12.4 C7.6 15 9.4 16.2 11.9 16.2 C13.6 16.2 15.1 15.7 16.4 14.9 L16.4 17.3 C15 18 13.3 18.3 11.5 18.3 C6.6 18.3 3.6 15.3 3.6 11 C3.6 6.3 7 2.2 11.2 2.2 C14.6 2.2 16.7 5 16.7 9 Z M7.4 10.8 L14.3 10.8 C14.3 7.4 12.9 5.2 10.8 5.2 C8.8 5.2 7.6 7.6 7.4 10.8 Z" fill="#1b80d8"/><path d="M2 10.3 C2.8 7 5 4.8 8.2 4 C6.2 5.4 5 7.2 4.4 9.4 Z" fill="#1b80d8"/></svg><div class="a" style="left:183px;top:546px;width:36px;height:30px;background:#383838;"></div><div class="a" style="left:183px;top:574.5px;width:36px;height:1.5px;background:#b8b8b8;"></div><svg class="a" style="left:192px;top:553px;" width="18" height="16" viewBox="0 0 18 16"><polygon points="0.5,1 6.5,1 8,2.5 17,2.5 17,14.5 0.5,14.5" fill="#f4d27a"/><rect x="0.5" y="4" width="16.5" height="10.5" fill="#f8dc8a"/><path d="M4.8 14.5 L4.8 10.8 C4.8 9.5 5.8 8.6 7 8.6 L11 8.6 C12.2 8.6 13.2 9.5 13.2 10.8 L13.2 14.5 L11.2 14.5 L11.2 11.2 L6.8 11.2 L6.8 14.5 Z" fill="#2aa6e2"/></svg><svg class="a" style="left:860px;top:540px;" width="164" height="36" viewBox="860 540 164 36"><path d="M882.1 563 L886.6 558.4 L891 563" stroke="#d0d0d0" stroke-width="1" fill="none"/><path d="M899.6 557 L899.6 559 M901 557 L901 559 M898.8 559 L901.8 559 L901.8 561 L900.3 562 L900.3 565" stroke="#d8d8d8" stroke-width="0.8" fill="none"/><rect x="902.2" y="558.2" width="8" height="6" fill="none" stroke="#d8d8d8" stroke-width="0.9"/><rect x="903.2" y="559.2" width="4.8" height="4" fill="#e8e8e8"/><rect x="910.2" y="560.2" width="0.8" height="2" fill="#d8d8d8"/><rect x="917.5" y="556.8" width="3" height="4" fill="none" stroke="#d8d8d8" stroke-width="0.8"/><rect x="920.5" y="556.8" width="8.5" height="6.5" fill="none" stroke="#d8d8d8" stroke-width="0.9"/><path d="M918.9 560.8 L918.9 565.6 M924.7 563.3 L924.7 565.4 M922.5 565.6 L927 565.6" stroke="#d8d8d8" stroke-width="0.8"/><path d="M935.2 559.5 L937 559.5 L939.8 557.2 L939.8 564.6 L937 562.3 L935.2 562.3 Z" fill="none" stroke="#d8d8d8" stroke-width="0.9"/><path d="M941.5 559 A3 3 0 0 1 941.5 563 M943.3 557.8 A5 5 0 0 1 943.3 564.2 M945.2 556.7 A7 7 0 0 1 945.2 565.3" fill="none" stroke="#d8d8d8" stroke-width="0.8"/><polygon points="953,555.2 965,555.2 965,564.8 959.8,564.8 958.5,566.5 957.2,564.8 953,564.8" fill="#fafafa"/><rect x="954.6" y="557.6" width="8.8" height="0.9" fill="#555"/><rect x="954.6" y="559.6" width="8.8" height="0.9" fill="#555"/><rect x="954.6" y="561.6" width="5.8" height="0.9" fill="#555"/><rect x="1020" y="546.4" width="1" height="29.6" fill="#5a5a5a"/></svg><span class="t" style="left:978.50px;top:548.74px;font-size:10.00px;color:#f0f0f0;transform:scaleX(0.8376);transform-origin:left top;">5:21 PM</span><span class="t" style="left:976.60px;top:561.74px;font-size:10.00px;color:#f0f0f0;transform:scaleX(0.8909);transform-origin:left top;">7/4/2016</span></body></html>
